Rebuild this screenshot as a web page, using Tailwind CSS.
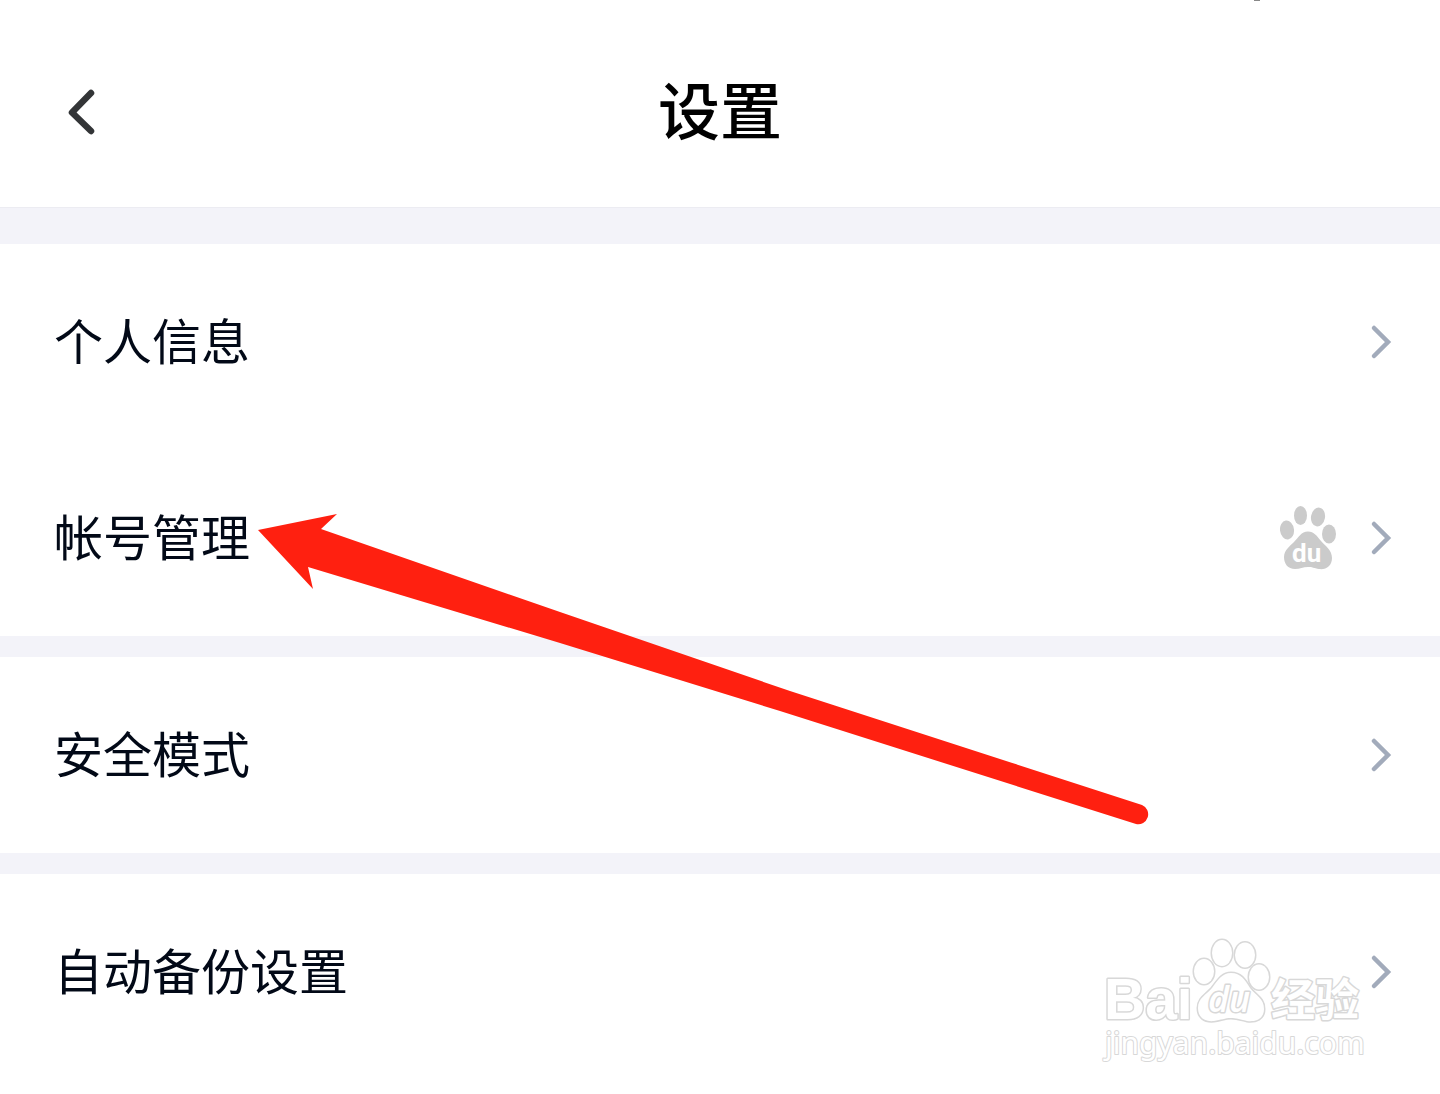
<!DOCTYPE html>
<html lang="zh-CN">
<head>
<meta charset="utf-8">
<meta name="viewport" content="width=device-width, initial-scale=1">
<title>设置</title>
<script src="https://cdn.jsdelivr.net/npm/@tailwindcss/browser@4"></script>
</head>
<body class="relative min-h-screen overflow-x-hidden bg-white font-['Noto_Sans_CJK_SC',sans-serif] text-[#020917]">
<svg class="hidden">
  <symbol id="chevron" viewBox="0 0 24 36"><path d="M4 4 18 18 4 32" fill="none" stroke="#a2abbb" stroke-width="4.500" stroke-linecap="round" stroke-linejoin="miter"/></symbol>
</svg>
<header class="relative flex h-52 items-center justify-center border-b border-[#ececf2] pt-4">
  <button type="button" aria-label="返回" class="absolute left-16 flex h-12 w-9 items-center">
    <svg class="h-12 w-9" viewBox="0 0 36 48" fill="none" stroke="#333537" stroke-width="6.5" stroke-linecap="round" stroke-linejoin="round"><path d="M27 5 8 24.500 27 43"/></svg>
  </button>
  <h1 class="pb-2 text-[62px] leading-[80px] font-medium text-black">设置</h1>
  <span class="absolute top-0 right-45 h-px w-1.5 bg-[#888]"></span>
</header>
<main class="bg-[#f3f3f9] pt-9">
  <ul class="flex flex-col bg-white">
    <li><a href="#profile" class="flex h-49 items-center justify-between pr-[46px] pl-[54px]"><span class="pb-1.5 text-[49px] leading-[72px] font-normal">个人信息</span><svg class="h-9 w-6"><use href="#chevron"/></svg></a></li>
    <li><a href="#account" class="flex h-49 items-center pr-[46px] pl-[54px]"><span class="grow pb-1.5 text-[49px] leading-[72px] font-normal">帐号管理</span>
      <svg class="mr-[34px] h-16 w-14" viewBox="0 0 56 64" fill="#cbcbcb"><ellipse cx="7" cy="24" rx="7" ry="9.500" transform="rotate(-7 7 24)"/><ellipse cx="20.500" cy="9.500" rx="6.500" ry="9.500"/><ellipse cx="38" cy="11" rx="7" ry="9.500" transform="rotate(10 38 11)"/><ellipse cx="49" cy="28" rx="7" ry="9.500"/><path d="M28 25.500C34 25.500 37 30 41 35 45 39.500 52 44 52 52 52 60 46 64 39 63 34 62 32 61 28 61 23 61 20 63 15 63 8 63 4 58 4 51 4 44 10 40 14 36 19 31 21 25.500 28 25.500Z"/><text x="12" y="56" fill="#fff" class="font-['Roboto'] text-[26px] font-bold">du</text></svg>
      <svg class="h-9 w-6"><use href="#chevron"/></svg></a></li>
  </ul>
  <ul class="mt-[21px] bg-white">
    <li><a href="#safe" class="flex h-49 items-center justify-between pr-[46px] pl-[54px]"><span class="pb-1.5 text-[49px] leading-[72px] font-normal">安全模式</span><svg class="h-9 w-6"><use href="#chevron"/></svg></a></li>
  </ul>
  <ul class="mt-[21px] bg-white pb-6">
    <li class="relative"><a href="#backup" class="flex h-49 items-center justify-between pr-[46px] pl-[54px]"><span class="pb-1.5 text-[49px] leading-[72px] font-normal">自动备份设置</span><svg class="h-9 w-6"><use href="#chevron"/></svg></a>
      <svg class="pointer-events-none absolute top-14 right-17 h-36 w-68" viewBox="0 0 272 144" fill="#fff" stroke="#d8d8d8" stroke-width="3" stroke-linejoin="round" paint-order="stroke">
        <text x="4" y="89" class="font-['Liberation_Sans'] text-[57px] font-bold">Bai</text>
        <g stroke-width="3"><ellipse cx="104" cy="41.500" rx="10" ry="12.500"/><ellipse cx="122" cy="23" rx="10" ry="13"/><ellipse cx="145" cy="25" rx="10" ry="12.500"/><ellipse cx="159" cy="47" rx="10" ry="12.500"/><path d="M131 43C141 43 145 50 150 58 156 66 164 68 164 79 164 89 156 92 147 91 139 89 136 88 131 88 125 88 121 90 114 91 104 92 98 87 98 78 98 68 106 65 112 58 118 50 122 43 131 43Z"/></g>
        <text x="108" y="82" class="font-['Open_Sans'] text-[36px] font-semibold italic">du</text>
        <text x="171" y="86" class="font-['Noto_Sans_CJK_SC'] text-[44px] font-bold">经验</text>
        <text x="5" y="124" stroke-width="2" class="font-['Noto_Sans'] text-[30px]">jingyan.baidu.com</text>
      </svg>
    </li>
  </ul>
</main>
<svg class="pointer-events-none absolute top-[500px] left-[240px] h-[340px] w-[920px]" viewBox="240 500 920 340" fill="#ff2010"><path d="M258 530 337 514 321 529 560 612 790 691 1142 805A10 10 0 0 1 1136 824L780 711 560 643 308 567 313 589Z"/></svg>
</body>
</html>
